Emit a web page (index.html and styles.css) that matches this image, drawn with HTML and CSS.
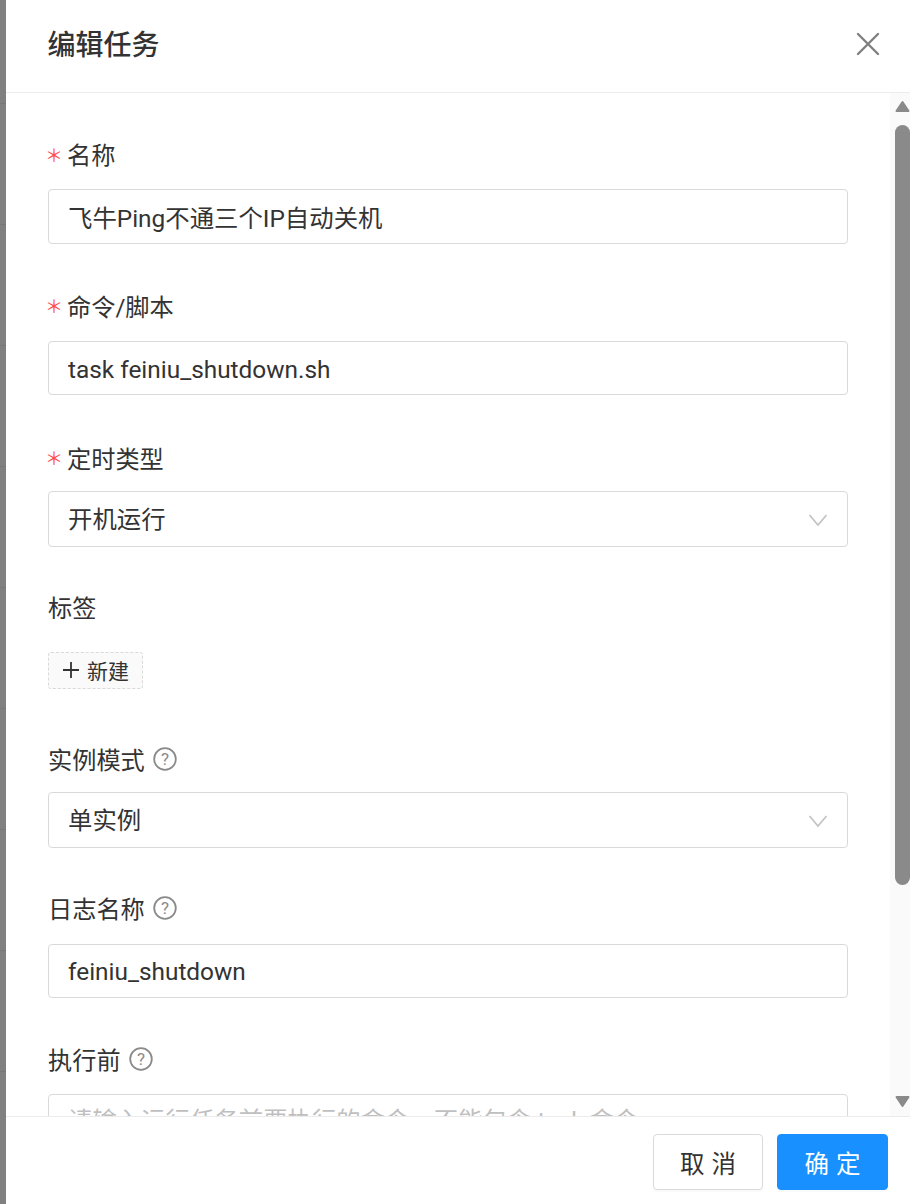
FILE: index.html
```html
<!DOCTYPE html>
<html lang="zh-CN">

<head>
  <meta charset="UTF-8">
  <meta name="viewport" content="width=device-width, initial-scale=1.0">
  <title>编辑任务</title>
  <link rel="stylesheet" href="styles.css">
</head>

<body>
  <div class="drawer">
    <header class="drawer-header">
      <h1>编辑任务</h1>
      <button class="close" aria-label="关闭">
        <svg width="24" height="24" viewBox="0 0 24 24"><path d="M2 2 L22 22 M22 2 L2 22" /></svg>
      </button>
    </header>

    <div class="drawer-body">
      <form class="form" autocomplete="off">
        <div class="field">
          <label class="label required">名称</label>
          <input class="input" type="text" value="飞牛Ping不通三个IP自动关机">
        </div>
        <div class="field">
          <label class="label required">命令/脚本</label>
          <input class="input input-latin" type="text" value="task feiniu_shutdown.sh">
        </div>
        <div class="field field-select">
          <label class="label required">定时类型</label>
          <div class="select">开机运行
            <svg width="20" height="12" viewBox="0 0 20 12"><path d="M1.5 1 L10 11 L18.500 1" /></svg>
          </div>
        </div>
        <div class="field field-tags">
          <label class="label">标签</label>
          <button type="button" class="tag-add">
            <svg width="18" height="18" viewBox="0 0 18 18"><path d="M9 1 V17 M1 9 H17" /></svg>
            新建
          </button>
        </div>
        <div class="field field-select">
          <label class="label">实例模式
            <svg class="hint" width="24" height="24" viewBox="0 0 24 24"><circle cx="12" cy="12" r="10.8" /><text x="12" y="18" text-anchor="middle">?</text></svg>
          </label>
          <div class="select">单实例
            <svg width="20" height="12" viewBox="0 0 20 12"><path d="M1.5 1 L10 11 L18.500 1" /></svg>
          </div>
        </div>
        <div class="field field-log">
          <label class="label">日志名称
            <svg class="hint" width="24" height="24" viewBox="0 0 24 24"><circle cx="12" cy="12" r="10.8" /><text x="12" y="18" text-anchor="middle">?</text></svg>
          </label>
          <input class="input input-latin" type="text" value="feiniu_shutdown">
        </div>
        <div class="field">
          <label class="label">执行前
            <svg class="hint" width="24" height="24" viewBox="0 0 24 24"><circle cx="12" cy="12" r="10.8" /><text x="12" y="18" text-anchor="middle">?</text></svg>
          </label>
          <input class="input" type="text" placeholder="请输入运行任务前要执行的命令，不能包含 task 命令">
        </div>
      </form>

      <div class="scrollbar">
        <svg class="arrow arrow-up" width="15" height="12" viewBox="0 0 15 12"><path d="M7.500 2 L13.500 11 H1.500 Z" /></svg>
        <span class="thumb"></span>
        <svg class="arrow arrow-down" width="15" height="12" viewBox="0 0 15 12"><path d="M1.500 1 H13.500 L7.500 10 Z" /></svg>
      </div>
    </div>

    <footer class="drawer-footer">
      <button class="btn">取 消</button>
      <button class="btn btn-primary">确 定</button>
    </footer>
  </div>
</body>

</html>
```

FILE: styles.css
```css
* {
  margin: 0;
  padding: 0;
  box-sizing: border-box;
}

html,
body {
  height: 100%;
  overflow: hidden;
}

body {
  background-color: #808080;
  background-image: repeating-linear-gradient(to bottom, #808080 0, #808080 120px, #777 120px, #777 121px);
  background-position: 0 -17px;
  padding-left: 6px;
  font-family: Roboto, "Noto Sans CJK SC", sans-serif;
  font-size: 24px;
  color: #333;
}

.drawer {
  display: flex;
  flex-direction: column;
  height: 1204px;
  background-color: #fff;
}

/* 头部 */
.drawer-header {
  display: flex;
  justify-content: space-between;
  align-items: center;
  flex: none;
  height: 93px;
  padding: 0 30px 4px 41.500px;
  border-bottom: 1px solid #ececec;
}

.drawer-header h1 {
  padding-top: 4px;
  font-size: 28px;
  font-weight: 500;
  line-height: 1.5;
}

.close {
  display: flex;
  border: none;
  background: none;
}

.close path {
  fill: none;
  stroke: #808080;
  stroke-width: 2.4;
  stroke-linecap: round;
}

/* 表单区域 */
.drawer-body {
  display: flex;
  flex: 1;
  min-height: 0;
}

.form {
  flex: 1;
  min-width: 0;
  height: 100%;
  overflow: hidden;
  padding: 44px 42px 0;
}

.field {
  margin-bottom: 45.360px;
}

.label {
  display: flex;
  align-items: center;
  gap: 8px;
  height: 36px;
  margin-bottom: 16px;
  padding-top: 2px;
  font-size: 24.200px;
  line-height: 34px;
}

.required::before {
  content: "＊";
  flex: none;
  width: 14px;
  margin-left: -3px;
  margin-bottom: 5px;
  font-family: "Noto Sans CJK SC", sans-serif;
  font-size: 18px;
  line-height: 1;
  color: #ff4d4f;
}

.hint {
  margin-top: -3px;
}

.hint circle {
  fill: none;
  stroke: #8a8a8a;
  stroke-width: 1.8;
}

.hint text {
  font-size: 17px;
  fill: #8a8a8a;
}

.input,
.select {
  display: block;
  width: 100%;
  height: 54.500px;
  padding: 0 19px;
  border: 1px solid #d9d9d9;
  border-radius: 4px;
  background-color: #fff;
  font-family: inherit;
  font-size: 24.400px;
  color: #333;
  outline: none;
}

.input-latin {
  padding-top: 2px;
}

.input::placeholder {
  color: #bfbfbf;
}

.select {
  display: flex;
  justify-content: space-between;
  align-items: center;
  height: 56px;
  padding-top: 2px;
  line-height: 1;
}

.select path {
  fill: none;
  stroke: #c4c4c4;
  stroke-width: 1.8;
}

.field-select {
  margin-bottom: 43px;
}

.field-select .label {
  margin-bottom: 14px;
}

.field-tags {
  margin-bottom: 53px;
}

.field-tags .label {
  margin-bottom: 26px;
}

.field-log {
  margin-bottom: 43.500px;
}

.field-log .label {
  margin-bottom: 17px;
}

.tag-add {
  display: inline-flex;
  align-items: center;
  gap: 7px;
  width: 95px;
  height: 37px;
  padding: 0 0 0 13px;
  border: 1px dashed #d9d9d9;
  border-radius: 3px;
  background-color: #fafafa;
  font-family: inherit;
  font-size: 21px;
  color: #333;
}

.tag-add path {
  fill: none;
  stroke: #333;
  stroke-width: 1.8;
}

/* 滚动条 */
.scrollbar {
  display: flex;
  flex-direction: column;
  align-items: flex-end;
  flex: none;
  width: 20px;
  background-color: #fafafa;
}

.arrow {
  flex: none;
}

.arrow path {
  fill: #8a8a8a;
  stroke: #8a8a8a;
  stroke-width: 2;
  stroke-linejoin: round;
}

.arrow-up {
  margin-top: 7px;
}

.arrow-down {
  margin-top: 211px;
}

.thumb {
  flex: none;
  width: 15px;
  height: 760px;
  margin-top: 13px;
  border-radius: 8px;
  background-color: #8a8a8a;
}

/* 底部 */
.drawer-footer {
  display: flex;
  justify-content: flex-end;
  gap: 14px;
  flex: none;
  height: 88px;
  padding: 17px 22px 0 0;
  border-top: 1px solid #ececec;
  background-color: #fff;
}

.btn {
  width: 110px;
  height: 56px;
  border: 1px solid #d9d9d9;
  border-radius: 4px;
  background-color: #fff;
  font-family: inherit;
  font-size: 24.500px;
  word-spacing: 1px;
  color: #333;
  box-shadow: 0 2px 0 rgba(0, 0, 0, 0.02);
}

.btn-primary {
  width: 111px;
  border-color: #1890ff;
  background-color: #1890ff;
  color: #fff;
}
```
